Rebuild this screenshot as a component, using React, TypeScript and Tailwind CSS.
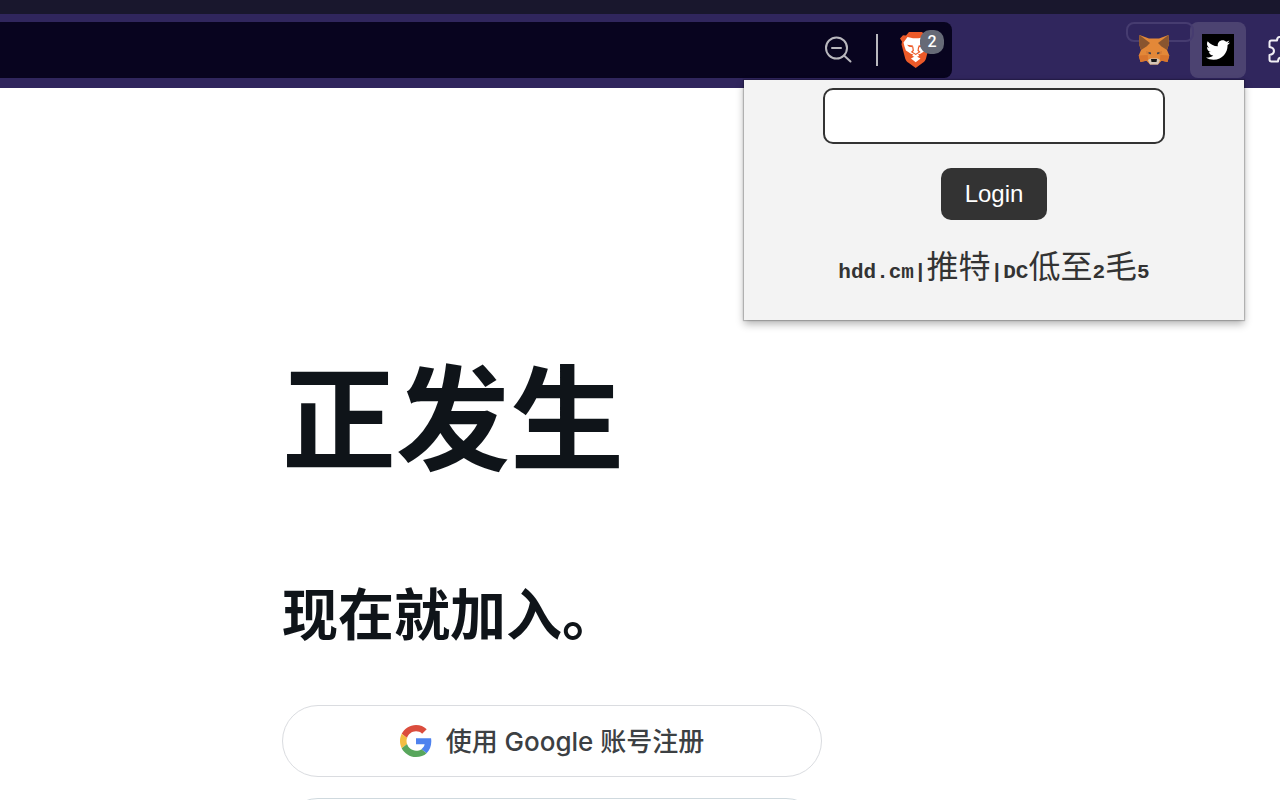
import { FaTwitter } from "react-icons/fa";

function ZoomOutIcon() {
  return (
    <svg viewBox="0 0 28 28" className="h-7 w-7" fill="none" stroke="#b9b8be" strokeWidth="2" strokeLinecap="round">
      <circle cx="12.5" cy="12" r="10.5" />
      <path d="M8 12h9M20 19.500l6.500 6" />
    </svg>
  );
}

function BraveIcon() {
  return (
    <svg viewBox="0 0 30 36" className="h-9 w-[30px]">
      <path
        fill="#ec5a29"
        d="M9 0h13l3.500 3.500 2.500-.3 2 3.300-1 3 .5 3-3.500 14c-.5 2-1.600 3.300-3.200 4.300L15.700 36l-7.200-5.200C6.800 29.700 5.800 28.500 5.200 26.500L1.500 12.500l.5-3L0 6.500l3-3.300 3 .3z"
      />
      <path
        fill="#fff"
        d="m7.500 5 5.500 1.200h5.500L24 5l4 5.500-1 4-1.500 4-5 3.200-2.500.8 1.200 1.200-3.500 1.800-3.500-1.800 1.200-1.200-2.500-.8-5-3.200L4.500 14.500l-1-4z"
      />
      <path fill="#ec5a29" d="m7 12.800 6 .7-.5 1.800-3.500-.6zM24.400 12.800l-6 .7.5 1.800 3.500-.6z" />
      <path fill="none" stroke="#ec5a29" strokeWidth="1.200" d="m12.700 14.500.6 4-1.500 1.500 3.900 2.400 3.900-2.400-1.500-1.500.6-4" />
      <path fill="#fff" d="m15.700 24 4.800 2.500-4.800 3.800-4.800-3.800z" />
    </svg>
  );
}

function FoxIcon() {
  return (
    <svg viewBox="0 0 32 32" className="h-8 w-8">
      <path fill="#e38838" d="M1.500 1 11 4.500h10L30.500 1 31 10l-2 6 2.300 5.500-1.800 6.500-6-1.200L20 30.500h-8l-3.500-3.700-6 1.200L.7 21.500 3 16 1 10z" />
      <path fill="#89552f" d="m1.500 1 10.500 8-3.500 3.500L3 16l-2-6zM30.500 1 20 9l3.500 3.500L29 16l2-6z" />
      <path fill="#d8752d" d="m.7 21.500 9-.5.3 5.300-7.500 1.700zM31.300 21.500l-9-.5-.3 5.300 7.500 1.700z" />
      <path fill="#d47a35" d="m8 17 4 1 .8 2.500-4.300-.5zM24 17l-4 1-.8 2.500 4.300-.5z" />
      <path fill="#3d4452" d="m10.500 18 2.500.5v1.700l-2.300-.4zM21.500 18l-2.500.5v1.700l2.300-.4z" />
      <path fill="#d4c5b7" d="m10 26 2.500-1.500h7L22 26l-2 4.500h-8z" />
      <path fill="#171616" d="M13 25h6l-.5 3h-5z" />
    </svg>
  );
}

function PuzzleIcon() {
  return (
    <svg viewBox="0 0 28 28" className="h-7 w-7 shrink-0" fill="none" stroke="#f1eff5" strokeWidth="2" strokeLinejoin="round">
      <path d="M1.500 10V6.500q0-2 2-2H9c0-5 8-5 8 0h4.500q2 0 2 2V11c5 0 5 8 0 8v4.500q0 2-2 2H17c0-3-1-4-3.500-4S10 22.500 10 25.500H3.500q-2 0-2-2V19c6-1 6-7 0-8z" />
    </svg>
  );
}

function GoogleIcon() {
  return (
    <svg viewBox="0 0 48 48" className="h-8 w-8">
      <path fill="#db4d3d" d="M24 9.500c3.540 0 6.710 1.220 9.210 3.600l6.850-6.850C35.900 2.380 30.470 0 24 0 14.620 0 6.510 5.380 2.560 13.220l7.980 6.190C12.430 13.720 17.740 9.500 24 9.500z" />
      <path fill="#4e82ee" d="M46.980 24.550c0-1.570-.15-3.090-.38-4.550H24v9.020h12.940c-.58 2.960-2.260 5.480-4.780 7.180l7.730 6c4.510-4.180 7.090-10.360 7.090-17.650z" />
      <path fill="#f2bd42" d="M10.530 28.590c-.48-1.450-.76-2.990-.76-4.590s.27-3.140.76-4.590l-7.980-6.190C.92 16.460 0 20.120 0 24c0 3.880.92 7.540 2.560 10.780z" />
      <path fill="#58a65c" d="M24 48c6.480 0 11.930-2.130 15.890-5.810l-7.730-6c-2.150 1.450-4.920 2.300-8.160 2.300-6.260 0-11.570-4.220-13.470-9.910l-7.980 6.190C6.510 42.620 14.620 48 24 48z" />
    </svg>
  );
}

function Toolbar() {
  return (
    <header className="flex h-[74px] items-start overflow-hidden bg-[#30265d] pt-2">
      <div className="flex h-14 flex-1 items-center justify-end rounded-r-lg bg-[#08041f] pr-2">
        <button type="button" aria-label="Zoom out" className="mr-6">
          <ZoomOutIcon />
        </button>
        <span className="mr-[22px] h-8 w-0.5 bg-[#b9b8be]" />
        <button type="button" aria-label="Brave Shields" className="relative w-11">
          <BraveIcon />
          <span className="absolute -top-0.5 right-0 flex h-6 w-6 items-center justify-center rounded-[10px] bg-[#666a77] font-['Roboto',sans-serif] text-base font-medium text-white">
            2
          </span>
        </button>
      </div>

      <div className="ml-[174px] flex items-center gap-2">
        <button type="button" aria-label="MetaMask" className="relative flex h-14 w-14 items-center justify-center">
          <span className="absolute top-0 left-0 h-5 w-[68px] rounded-lg border-2 border-[#463c70]" />
          <span className="relative">
            <FoxIcon />
          </span>
        </button>
        <button type="button" aria-label="Twitter" className="flex h-14 w-14 items-center justify-center rounded-lg bg-[#4c4371]">
          <span className="flex h-8 w-8 items-center justify-center bg-black">
            <FaTwitter className="h-6 w-6 text-white" />
          </span>
        </button>
        <button type="button" aria-label="Extensions" className="ml-3.5 flex w-3 overflow-hidden">
          <PuzzleIcon />
        </button>
      </div>
    </header>
  );
}

function LoginPopup() {
  return (
    <form
      onSubmit={(e) => e.preventDefault()}
      className="absolute top-20 right-9 flex h-60 w-[500px] flex-col items-center bg-[#f3f3f3] pt-2 text-[#333] shadow-[0_0_1px_1px_rgba(0,0,0,0.2),0_4px_8px_rgba(0,0,0,0.3)]"
    >
      <input
        type="text"
        aria-label="Token"
        className="h-14 w-[342px] rounded-[10px] border-2 border-[#333] bg-white px-4 text-2xl outline-none"
      />
      <button type="submit" className="mt-6 h-[52px] rounded-[10px] bg-[#333] px-6 font-['Liberation_Sans',sans-serif] text-2xl text-white">
        Login
      </button>
      <p className="mt-[26px] font-['Liberation_Mono','Noto_Sans_CJK_SC',monospace] text-[21px] leading-[48px] font-bold whitespace-nowrap">
        hdd.cm|<span className="text-[32px] font-normal">推特</span>|DC
        <span className="text-[32px] font-normal">低至</span>2<span className="text-[32px] font-normal">毛</span>5
      </p>
    </form>
  );
}

export default function App() {
  return (
    <div className="relative h-screen overflow-hidden bg-white font-['Inter','Noto_Sans_CJK_SC',sans-serif]">
      <div className="h-3.5 bg-[#19172d]" />
      <Toolbar />
      <LoginPopup />

      <main className="ml-[282px] text-[#0f1419]">
        <h1 className="pt-64 font-['Noto_Sans_CJK_SC',sans-serif] text-[114px] leading-[136px] font-bold">正发生</h1>
        <h2 className="mt-24 font-['Noto_Sans_CJK_SC',sans-serif] text-[56px] leading-[70px] font-bold">现在就加入。</h2>
        <div className="mt-[59px] flex w-[540px] flex-col gap-[21px]">
          <button
            type="button"
            className="flex h-[72px] items-center justify-center gap-3.5 rounded-full border border-[#dadce0] text-[26px] font-medium text-[#3c4043]"
          >
            <GoogleIcon />
            使用 Google 账号注册
          </button>
          <button type="button" aria-label="使用 Apple 账号注册" className="h-[72px] rounded-full border border-[#cfd9de]" />
        </div>
      </main>
    </div>
  );
}
